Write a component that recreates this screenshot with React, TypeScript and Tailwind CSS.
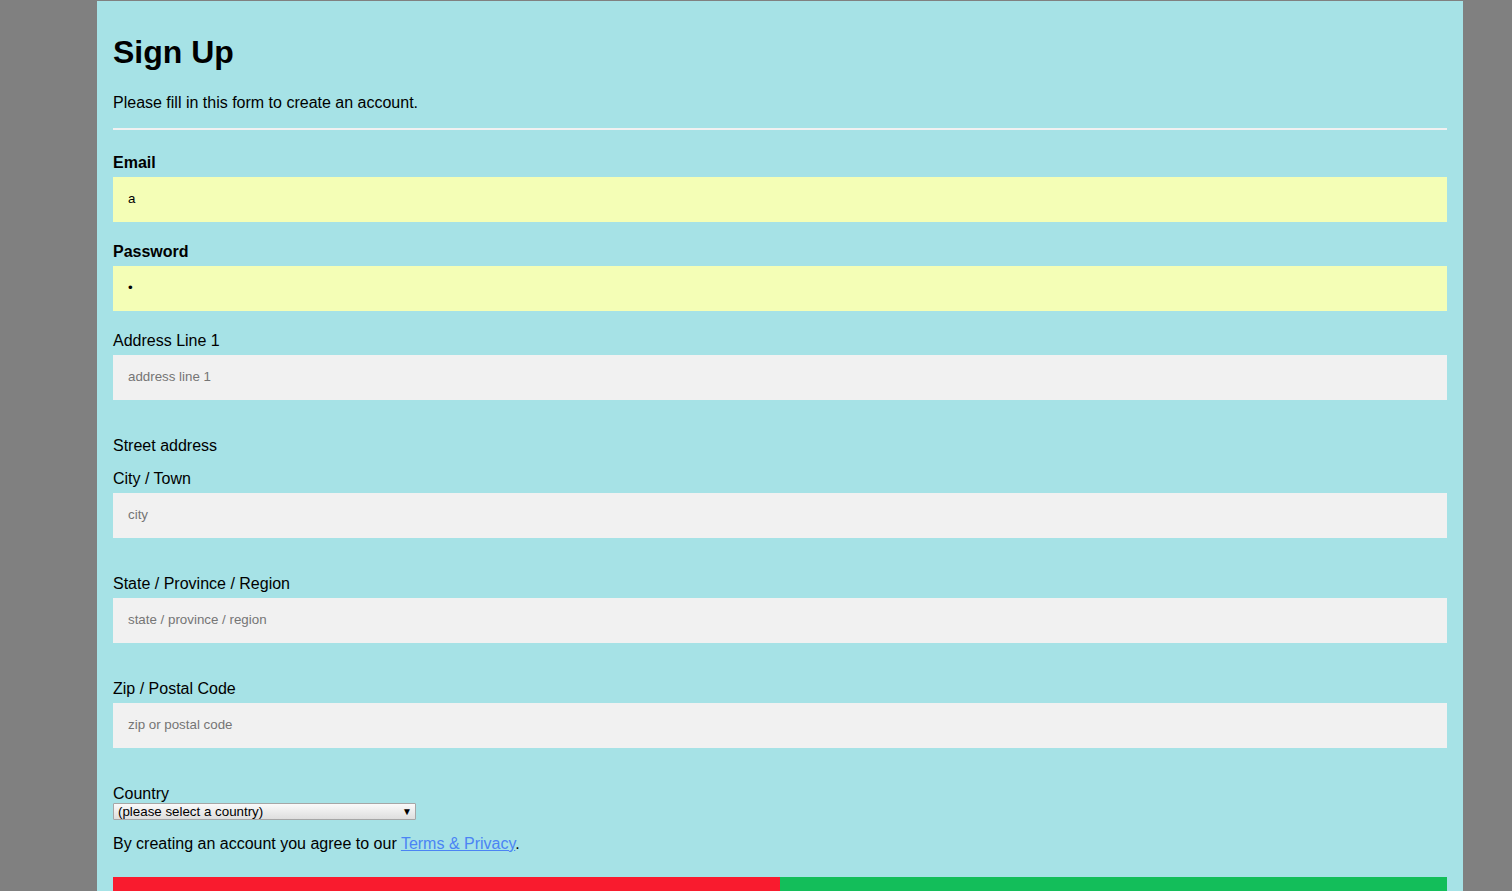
export default function App() {
  const fieldInput =
    "block w-full h-[45px] mt-[5px] px-[15px] pb-[2px] border-0 outline-none bg-[#f1f1f1] text-[13.33px] text-black placeholder:text-[#757575] font-['Liberation_Sans',Arial,sans-serif]"

  return (
    <div className="min-h-screen bg-[#808080] pt-[1px] font-['Liberation_Sans',Arial,sans-serif] text-black">
      <div className="ml-[97px] w-[1366px] bg-[#a6e2e6] px-[16px] pt-[33px] pb-[40px]">
        {/* Header */}
        <h1 className="text-[32px] leading-[37px] font-bold">Sign Up</h1>
        <p className="mt-[23px] text-[16px] leading-[18px]">Please fill in this form to create an account.</p>
        <div className="mt-[16px] h-[2px] bg-[#f1f1f1]" />

        {/* Account */}
        <label className="block mt-[24px] text-[16px] leading-[18px] font-bold">Email</label>
        <input type="text" readOnly value="a" className={fieldInput + " !bg-[#f4feb6]"} />

        <label className="block mt-[21px] text-[16px] leading-[18px] font-bold">Password</label>
        <input type="password" readOnly value="a" className={fieldInput + " !bg-[#f4feb6]"} />

        {/* Address */}
        <label className="block mt-[21px] text-[16px] leading-[18px]">Address Line 1</label>
        <input type="text" placeholder="address line 1" className={fieldInput} />

        <div className="mt-[37px] text-[16px] leading-[18px]">Street address</div>

        <label className="block mt-[15px] text-[16px] leading-[18px]">City / Town</label>
        <input type="text" placeholder="city" className={fieldInput} />

        <label className="block mt-[37px] text-[16px] leading-[18px]">State / Province / Region</label>
        <input type="text" placeholder="state / province / region" className={fieldInput} />

        <label className="block mt-[37px] text-[16px] leading-[18px]">Zip / Postal Code</label>
        <input type="text" placeholder="zip or postal code" className={fieldInput} />

        <label className="block mt-[37px] text-[16px] leading-[18px]">Country</label>
        <div className="relative w-[303px]">
          <select className="block w-full h-[17px] appearance-none rounded-[1px] border border-[#a6a6a6] bg-gradient-to-b from-[#fafafa] to-[#dedede] pl-[4px] pr-[16px] text-[13.33px] leading-[15px] text-black font-['Liberation_Sans',Arial,sans-serif] outline-none">
            <option>(please select a country)</option>
          </select>
          <span className="pointer-events-none absolute right-[4px] top-[1px] text-[10px] leading-[15px] text-black">▼</span>
        </div>

        <p className="mt-[15px] text-[16px] leading-[18px]">
          By creating an account you agree to our{" "}
          <a href="#" className="text-[#4b84f4] underline">Terms &amp; Privacy</a>.
        </p>

        {/* Buttons */}
        <div className="mt-[24px] flex">
          <button className="w-1/2 py-[14px] bg-[#f91b2e] text-white text-[16px] leading-[18px]">Cancel</button>
          <button className="w-1/2 py-[14px] bg-[#13be5a] text-white text-[16px] leading-[18px]">Sign Up</button>
        </div>
      </div>
    </div>
  )
}
